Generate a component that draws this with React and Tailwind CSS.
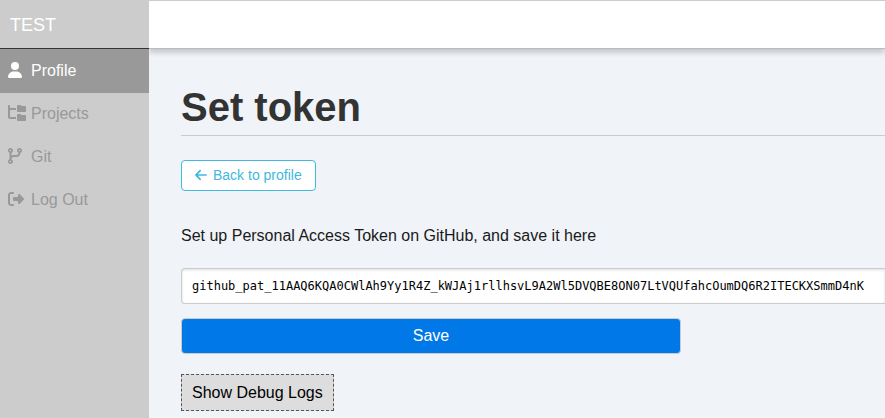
import { useState } from 'react';
import { FaUser, FaFolderTree, FaCodeBranch, FaRightFromBracket, FaArrowLeft } from 'react-icons/fa6';

const items = [
  { label: 'Profile', Icon: FaUser, size: 'h-4 w-3.5', active: true },
  { label: 'Projects', Icon: FaFolderTree, size: 'h-4 w-[18px]' },
  { label: 'Git', Icon: FaCodeBranch, size: 'h-4 w-3.5' },
  { label: 'Log Out', Icon: FaRightFromBracket, size: 'h-4 w-4' },
];

function Sidebar() {
  return (
    <nav className="w-[149px] shrink-0 bg-[#ccc]">
      <a href="#home" className="flex h-[49px] items-center border-b border-[#333] px-2.5 pt-0.5 text-[18px] text-white">
        TEST
      </a>
      <ul>
        {items.map(({ label, Icon, size, active }) => (
          <li key={label}>
            <a
              href={'#' + label}
              className={
                active
                  ? 'flex h-11 items-center bg-[#999] pl-2 text-white'
                  : 'flex h-[43px] items-center pb-0.5 pl-2 text-[#999]'
              }
            >
              <span className="flex w-[23px] shrink-0 pb-0.5">
                <Icon className={size} />
              </span>
              {label}
            </a>
          </li>
        ))}
      </ul>
    </nav>
  );
}

export default function App() {
  const [token, setToken] = useState(
    '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'
  );
  return (
    <div className="flex min-h-screen bg-[#f0f3f8] font-['Liberation_Sans',Arial,sans-serif] text-base text-[#1a1a1a]">
      <Sidebar />
      <div className="min-w-0 flex-1 overflow-hidden">
        <header className="h-[49px] border-t border-b border-t-[#ccc] border-b-[#bbb] bg-white shadow-[0_4px_5px_rgba(0,0,0,0.17)]" />
        <main className="pt-[33px] pl-8">
          <h1 className="border-b border-[#ccc] pb-[3px] text-[40px] leading-[50px] font-bold text-[#333]">Set token</h1>
          <a
            href="#profile"
            className="mt-6 inline-flex h-[31px] items-center gap-1.5 rounded border border-[#41b8dd] bg-white px-[13px] text-[14px] text-[#41b8dd]"
          >
            <span className="flex pb-0.5">
              <FaArrowLeft className="h-3.5 w-3" />
            </span>
            Back to profile
          </a>
          <form onSubmit={(e) => e.preventDefault()}>
            <label htmlFor="token" className="mt-[33px] block leading-6">
              Set up Personal Access Token on GitHub, and save it here
            </label>
            <input
              id="token"
              type="text"
              value={token}
              onChange={(e) => setToken(e.target.value)}
              className="mt-5 block h-9 w-full rounded-l border border-r-0 border-[#ccc] bg-white pl-2.5 font-['DejaVu_Sans_Mono',monospace] text-[12px] text-black shadow-[inset_0_1px_3px_#ddd]"
            />
            <button
              type="submit"
              className="mt-3.5 block h-9 w-full max-w-[500px] rounded border border-[#ccc] bg-[#0078e7] text-white"
            >
              Save
            </button>
          </form>
          <button type="button" className="mt-5 h-[37px] border border-dashed border-[#555] bg-[#ddd] px-2.5 text-black">
            Show Debug Logs
          </button>
        </main>
      </div>
    </div>
  );
}
